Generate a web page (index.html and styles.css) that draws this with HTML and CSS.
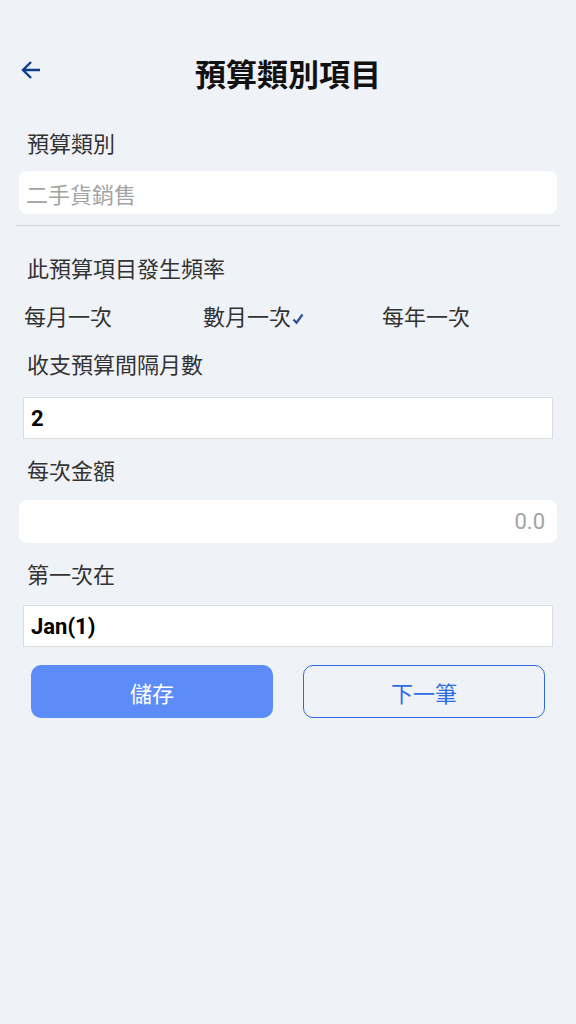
FILE: index.html
```html
<!DOCTYPE html>
<html lang="zh-Hant">
<head>
  <meta charset="UTF-8">
  <title>預算類別項目</title>
  <link rel="stylesheet" href="styles.css">
</head>
<body>
  <header class="topbar">
    <a class="back" href="#">
      <svg width="20" height="20" viewBox="0 0 20 20"><path d="M19 10H2M10 2L2 10l8 8" fill="none" stroke="#0d3c8e" stroke-width="2.4"/></svg>
    </a>
    <h1>預算類別項目</h1>
    <span></span>
  </header>

  <form class="budget-form">
    <div class="label first">預算類別</div>
    <div class="field round placeholder">二手貨銷售</div>

    <hr class="divider">

    <div class="label after-divider">此預算項目發生頻率</div>
    <div class="freq">
      <span>每月一次</span>
      <span>數月一次<svg class="check" width="12" height="12" viewBox="0 0 12 12"><path d="M1.5 6.5l3 3.2L10.5 1.5" fill="none" stroke="#2b4f9c" stroke-width="2.2"/></svg></span>
      <span>每年一次</span>
    </div>

    <div class="label">收支預算間隔月數</div>
    <div class="field box value">2</div>

    <div class="label">每次金額</div>
    <div class="field round placeholder amount">0.0</div>

    <div class="label">第一次在</div>
    <div class="field box value last">Jan(1)</div>

    <div class="actions">
      <button type="button" class="btn primary">儲存</button>
      <button type="button" class="btn outline">下一筆</button>
    </div>
  </form>
</body>
</html>
```

FILE: styles.css
```css
body {
  margin: 0;
  background: #eff2f6;
  font-family: Roboto, "Noto Sans CJK TC", sans-serif;
  color: #333;
}
.topbar {
  display: grid;
  grid-template-columns: 1fr auto 1fr;
  align-items: center;
  height: 56px;
  margin-top: 44px;
  padding-left: 21px;
  padding-right: 21px;
}
.back {
  display: flex;
  width: 20px;
  height: 20px;
  margin-top: -5px;
}
.topbar h1 {
  margin: 0;
  font-size: 31px;
  font-weight: 700;
  color: #111;
}
.budget-form {
  display: flex;
  flex-direction: column;
}
.label {
  font-size: 22px;
  line-height: 30px;
  padding-left: 27px;
  margin-top: 18px;
  color: #333;
}
.label.first {
  margin-top: 30px;
}
.label.after-divider {
  margin-top: 29px;
}
.field {
  background: #fff;
  font-size: 22px;
  display: flex;
  align-items: center;
  box-sizing: border-box;
}
.field.round {
  margin: 11px 19px 0;
  height: 43px;
  border-radius: 8px;
  padding: 0 12px 0 7px;
}
.label + .field.round.amount {
  margin-top: 13px;
  justify-content: flex-end;
}
.field.box {
  margin: 16px 23px 0;
  height: 42px;
  border: 1px solid #dcdcdc;
  padding: 0 7px;
}
.field.box.last {
  margin-top: 14px;
}
.placeholder {
  color: #a3a3a3;
}
.value {
  font-weight: 700;
  color: #000;
}
.divider {
  border: 0;
  border-top: 1px solid #cfd2d6;
  margin: 11px 16px 0;
}
.freq {
  display: grid;
  grid-template-columns: 179px 179px 179px;
  padding-left: 24px;
  margin-top: 18px;
  font-size: 22px;
  line-height: 30px;
  color: #333;
}
.check {
  margin-left: 1px;
}
.actions {
  display: grid;
  grid-template-columns: 1fr 1fr;
  gap: 30px;
  margin: 18px 31px 0;
}
.btn {
  height: 53px;
  border-radius: 10px;
  font-family: inherit;
  font-size: 22px;
}
.btn.primary {
  background: #5b8cf7;
  border: 0;
  color: #fff;
}
.btn.outline {
  background: transparent;
  border: 1px solid #2f6be0;
  color: #2f6be0;
}
```
